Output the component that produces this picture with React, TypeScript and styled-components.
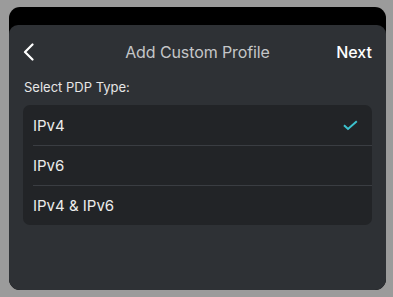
import React, { useState } from "react";
import styled, { createGlobalStyle } from "styled-components";

const GlobalStyle = createGlobalStyle`
  html, body {
    margin: 0;
    padding: 0;
    background: #9b9b9b;
    font-family: Inter, "Noto Sans", sans-serif;
  }
`;

const Frame = styled.div`
  margin: 7px 0 0 9px;
  width: 377px;
  height: 283px;
  background: #000;
  border-radius: 11px;
  overflow: hidden;
  display: flex;
  flex-direction: column;
  padding-top: 18px;
  box-sizing: border-box;
`;

const Sheet = styled.div`
  flex: 1;
  background: #2e3135;
  border-radius: 9px 9px 0 0;
  display: flex;
  flex-direction: column;
`;

const Header = styled.div`
  height: 54px;
  display: grid;
  grid-template-columns: 60px 1fr 60px;
  align-items: center;
  padding: 0 14px;
`;

const BackButton = styled.button`
  background: none;
  border: none;
  padding: 0;
  display: flex;
  align-items: center;
  cursor: pointer;
`;

const Title = styled.div`
  text-align: center;
  color: #c4c6c8;
  font-size: 16px;
  letter-spacing: -0.1px;
`;

const NextButton = styled.button`
  justify-self: end;
  background: none;
  border: none;
  padding: 0;
  color: #fff;
  font-family: inherit;
  font-size: 16px;
  font-weight: 500;
  cursor: pointer;
`;

const Label = styled.div`
  color: #e6e6e6;
  font-size: 13px;
  padding: 0 15px;
`;

const List = styled.div`
  margin: 10px 14px 0 14px;
  background: #222427;
  border-radius: 7px;
  overflow: hidden;
`;

const Row = styled.div<{ divided?: boolean }>`
  height: 40px;
  display: flex;
  align-items: center;
  justify-content: space-between;
  margin-left: 10px;
  padding-right: 14px;
  color: #ececec;
  font-size: 15px;
  cursor: pointer;
  box-shadow: ${(p) => (p.divided ? "inset 0 1px 0 #3a3d42" : "none")};
`;

const Check = () => (
  <svg width="15" height="11" viewBox="0 0 15 11">
    <path d="M1 5.2 L5 9 L13.8 1.2" fill="none" stroke="#3cc1cd" strokeWidth="2" />
  </svg>
);

const options = ["IPv4", "IPv6", "IPv4 & IPv6"];

export default function App() {
  const [selected, setSelected] = useState("IPv4");
  return (
    <>
      <GlobalStyle />
      <Frame>
        <Sheet>
          <Header>
            <BackButton>
              <svg width="12" height="18" viewBox="0 0 12 18">
                <path d="M9.5 1.5 L2 9 L9.5 16.5" fill="none" stroke="#fff" strokeWidth="2.2" strokeLinecap="round" strokeLinejoin="round" />
              </svg>
            </BackButton>
            <Title>Add Custom Profile</Title>
            <NextButton>Next</NextButton>
          </Header>
          <Label>Select PDP Type:</Label>
          <List>
            {options.map((o, i) => (
              <Row key={o} divided={i > 0} onClick={() => setSelected(o)}>
                <span>{o}</span>
                {selected === o && <Check />}
              </Row>
            ))}
          </List>
        </Sheet>
      </Frame>
    </>
  );
}
